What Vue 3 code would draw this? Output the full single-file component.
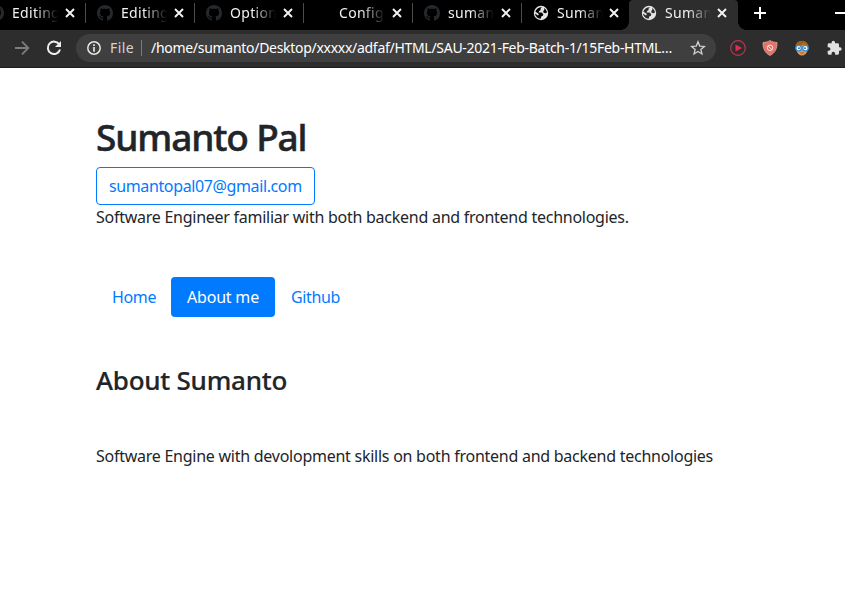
<script setup>
const tabs = [
  { title: 'Editing', icon: 'github', width: 109 },
  { title: 'Editing', icon: 'github', width: 109 },
  { title: 'Option', icon: 'github', width: 109 },
  { title: 'Config', icon: '', width: 109 },
  { title: 'suman', icon: 'github', width: 109 },
  { title: 'Suman', icon: 'globe', width: 108 },
  { title: 'Suman', icon: 'globe', width: 109, active: true },
]
const links = [
  { label: 'Home', cls: 'home' },
  { label: 'About me', cls: 'about active' },
  { label: 'Github', cls: 'github' },
]
</script>

<template>
  <div class="window">
    <header class="tabstrip">
      <div
        v-for="(tab, i) in tabs"
        :key="i"
        class="tab"
        :class="{ active: tab.active, divided: i > 0 && i < 6, web: tab.icon === 'globe' }"
        :style="{ width: tab.width + 'px' }"
      >
        <span class="favicon">
          <svg v-if="tab.icon === 'github'" width="16" height="16" viewBox="0 0 16 16">
            <path fill="#24292e" d="M8 0C3.58 0 0 3.58 0 8c0 3.54 2.29 6.53 5.47 7.59.4.07.55-.17.55-.38 0-.19-.01-.82-.01-1.49-2.01.37-2.53-.49-2.69-.94-.09-.23-.48-.94-.82-1.13-.28-.15-.68-.52-.01-.53.63-.01 1.08.58 1.23.82.72 1.21 1.87.87 2.33.66.07-.52.28-.87.51-1.07-1.78-.2-3.64-.89-3.64-3.95 0-.87.31-1.59.82-2.15-.08-.2-.36-1.02.08-2.12 0 0 .67-.21 2.2.82.64-.18 1.32-.27 2-.27s1.36.09 2 .27c1.53-1.04 2.2-.82 2.2-.82.44 1.1.16 1.92.08 2.12.51.56.82 1.27.82 2.15 0 3.07-1.87 3.75-3.65 3.95.29.25.54.73.54 1.48 0 1.07-.01 1.93-.01 2.2 0 .21.15.46.55.38A8.01 8.01 0 0 0 16 8c0-4.42-3.58-8-8-8z" />
          </svg>
          <svg v-else-if="tab.icon === 'globe'" width="16" height="16" viewBox="0 0 16 16">
            <circle cx="8" cy="8" r="7.2" fill="#e4e5e7" />
            <path :fill="tab.active ? '#2d2d2d' : '#000'" d="M9 2.200 7.600 3.600v1.300L6.200 6 5.500 7.600h3.200l1.600 1.700-.4 1.500-1.700.6-.5 2.300C4.500 13.600 2.200 11.200 2.100 8.600l2.800 2 1-.8L5 8.200 2.400 6.700C3.100 3.900 5.700 2 9 2.200zM11 3.100c1.800 1 2.900 2.800 2.900 4.700l-1.800.5-1.700-.8-.2-1.400 1.200-1z" />
          </svg>
        </span>
        <span class="title">{{ tab.title }}</span>
        <svg class="close" width="10" height="10" viewBox="0 0 10 10"><path d="M1 1l8 8M9 1L1 9" stroke="#f4f4f4" stroke-width="1.9" /></svg>
      </div>
      <svg class="plus" width="12" height="12" viewBox="0 0 12 12"><path d="M6 0v12M0 6h12" stroke="#fff" stroke-width="2" /></svg>
      <span class="minimize"></span>
    </header>

    <div class="toolbar">
      <svg class="forward" width="16" height="16" viewBox="0 0 16 16"><path d="M1 8h13M8 1.700L14.300 8 8 14.300" fill="none" stroke="#7d7d7d" stroke-width="1.800" /></svg>
      <svg class="reload" width="16" height="16" viewBox="0 0 16 16">
        <path d="M13.400 4.700A6.200 6.200 0 1 0 14 9.500" fill="none" stroke="#eee" stroke-width="2" /><path d="M15 1v6H9z" fill="#eee" />
      </svg>
      <div class="omnibox">
        <svg class="info" width="16" height="16" viewBox="0 0 16 16">
          <circle cx="8" cy="8" r="6.200" fill="none" stroke="#e6e6e6" stroke-width="1.500" /><path d="M8 4.300v1.700M8 7v4.700" stroke="#e6e6e6" stroke-width="1.700" />
        </svg>
        <span class="scheme">File</span>
        <span class="rule"></span>
        <span class="url">/home/sumanto/Desktop/xxxxx/adfaf/HTML/SAU-2021-Feb-Batch-1/15Feb-HTML…</span>
        <svg class="star" width="16" height="16" viewBox="0 0 16 16"><path d="M8 1.800l1.750 4.300 4.650.35-3.550 3 1.100 4.500L8 11.500l-3.950 2.450 1.100-4.500-3.550-3 4.650-.35z" fill="none" stroke="#d2d2d2" stroke-width="1.300" /></svg>
      </div>
      <div class="extensions">
        <svg width="16" height="16" viewBox="0 0 16 16"><circle cx="8" cy="8" r="7.300" fill="none" stroke="#bd3550" stroke-width="1.200" /><path d="M5.500 4.500L12 8l-6.500 3.500z" fill="#d83250" /></svg>
        <svg width="16" height="16" viewBox="0 0 16 16">
          <path d="M8 .5c2 1.400 4.400 1.900 7 2C15.200 8.500 13.200 12.800 8 15.500 2.800 12.800.8 8.500 1 2.500 3.600 2.400 6 1.900 8 .5z" fill="#e57368" stroke="#d9a49e" stroke-width=".8" />
          <circle cx="8" cy="7.800" r="2.800" fill="none" stroke="#f8dfdc" stroke-width="1" /><path d="M6 5.900l4 3.900" stroke="#f8dfdc" />
        </svg>
        <svg width="16" height="16" viewBox="0 0 16 16">
          <path d="M1.500 9C.8 3.500 3.500.7 8 .8s7.200 3 6.500 8.200z" fill="#98601f" />
          <path d="M2.500 6.500L10 4l3.500 3v3.500C12.500 14 10.500 15.500 8 15.500S3.500 14 2.500 10.500z" fill="#dc9858" />
          <path d="M2 6.500Q8 6 10 3q1.500 2.500 4 4" stroke="#a76b28" stroke-width="1.500" fill="none" />
          <circle cx="4.600" cy="8.200" r="2.700" fill="#f3faff" stroke="#2b8de0" stroke-width="1.200" /><circle cx="11.400" cy="8.200" r="2.700" fill="#f3faff" stroke="#2b8de0" stroke-width="1.200" />
          <circle cx="5" cy="8.200" r=".9" fill="#1764a8" /><circle cx="11" cy="8.200" r=".9" fill="#1764a8" />
          <path d="M6.300 13h3.500" stroke="#a85f32" />
        </svg>
        <svg width="16" height="16" viewBox="0 0 24 24"><path fill="#e1e1e1" d="M21 11h-1.500V7c0-1.100-.9-2-2-2h-4V3.500a2.500 2.500 0 0 0-5 0V5h-4c-1.100 0-2 .9-2 2v3.800H4a2.700 2.700 0 0 1 0 5.400H2.500V20c0 1.100.9 2 2 2h3.800v-1.500a2.700 2.700 0 0 1 5.400 0V22h3.800c1.100 0 2-.9 2-2v-4H21a2.500 2.500 0 0 0 0-5z" /></svg>
      </div>
    </div>

    <main class="page">
      <h1>Sumanto Pal</h1>
      <a class="mail">sumantopal07@gmail.com</a>
      <p class="tagline">Software Engineer familiar with both backend and frontend technologies.</p>
      <nav>
        <a v-for="link in links" :key="link.label" :class="link.cls">{{ link.label }}</a>
      </nav>
      <h2>About Sumanto</h2>
      <p class="bio">Software Engine with devolopment skills on both frontend and backend technologies</p>
    </main>
  </div>
</template>

<style>
body { margin: 0; background: #fff; overflow: hidden; }
</style>

<style scoped>
.window { width: 845px; height: 615px; overflow: hidden; font-family: "Noto Sans", "Open Sans", sans-serif; font-size: 16px; color: #212529; }
.window * { box-sizing: border-box; }
svg { display: block; flex: none; }
.tabstrip { display: flex; height: 30px; background: #000; overflow: hidden; }
.tab { position: relative; display: flex; align-items: center; flex: none; height: 30px; padding: 0 0 4px 12px; color: #f1f1f1; }
.tab:first-child { margin-left: -24px; }
.tab.divided::before { content: ""; position: absolute; left: 0; top: 3px; width: 1px; height: 20px; background: #4b4b4b; }
.favicon { width: 16px; height: 16px; flex: none; margin-right: 8px; }
.title { width: 47px; flex: none; font-size: 14px; line-height: 20px; letter-spacing: 0.3px; overflow: hidden; white-space: nowrap; -webkit-mask-image: linear-gradient(90deg, #000 48%, transparent 98%); mask-image: linear-gradient(90deg, #000 48%, transparent 98%); }
.close { margin-left: 6px; }
.web .close { margin-left: 5px; }
.tab.active { background: #2d2d2d; border-radius: 4px 4px 0 0; }
.tab.active::before, .tab.active::after { content: ""; position: absolute; bottom: 0; width: 8px; height: 8px; }
.tab.active::before { left: -8px; background: radial-gradient(circle at 0 0, #000 7.5px, #2d2d2d 8px); }
.tab.active::after { right: -8px; background: radial-gradient(circle at 100% 0, #000 7.5px, #2d2d2d 8px); }
.plus { margin: 7px 0 0 16px; }
.minimize { margin: 12px 0 0 69px; width: 12px; height: 2px; background: #fff; flex: none; }
.toolbar { display: flex; align-items: center; height: 38px; padding: 0 0 2px 14px; background: #2d2d2d; border-bottom: 1px solid #1e1e1e; }
.reload { margin-left: 16px; }
.omnibox { display: flex; align-items: center; width: 640px; height: 28px; margin-left: 14px; padding-left: 10px; border-radius: 14px; background: #3f3f3f; font-size: 14px; line-height: 20px; flex: none; }
.scheme { width: 31px; margin-left: 8px; color: #d4d4d4; letter-spacing: 0.4px; }
.rule { width: 1px; height: 16px; background: #7a7a7a; }
.url { width: 530px; margin-left: 9px; color: #fff; white-space: nowrap; letter-spacing: -0.29px; }
.star { margin-left: 9px; }
.extensions { display: flex; gap: 16px; margin-left: 14px; }
.page { padding: 46px 96px 0; white-space: nowrap; }
h1, h2, p { margin: 0; font-weight: 500; }
h1 { font-size: 37px; line-height: 46px; height: 53px; letter-spacing: -1.15px; -webkit-text-stroke: 0.5px #212529; }
.mail { display: block; width: 219px; height: 38px; padding: 6px 12px; border: 1px solid #007bff; border-radius: 4px; color: #007bff; line-height: 24px; letter-spacing: -0.38px; }
p { font-weight: 400; line-height: 24px; }
.tagline { letter-spacing: -0.26px; }
nav { display: flex; margin-top: 48px; height: 40px; }
nav a { padding: 8px 0 8px 16px; line-height: 24px; color: #007bff; letter-spacing: -0.35px; }
.home { width: 75px; }
.about { width: 104px; }
.active { border-radius: 4px; }
nav a.active { background: #007bff; color: #fff; letter-spacing: -0.2px; }
h2 { margin-top: 47px; font-size: 26px; line-height: 32px; letter-spacing: -0.25px; -webkit-text-stroke: 0.2px #212529; }
.bio { margin-top: 48px; letter-spacing: -0.255px; }
</style>
